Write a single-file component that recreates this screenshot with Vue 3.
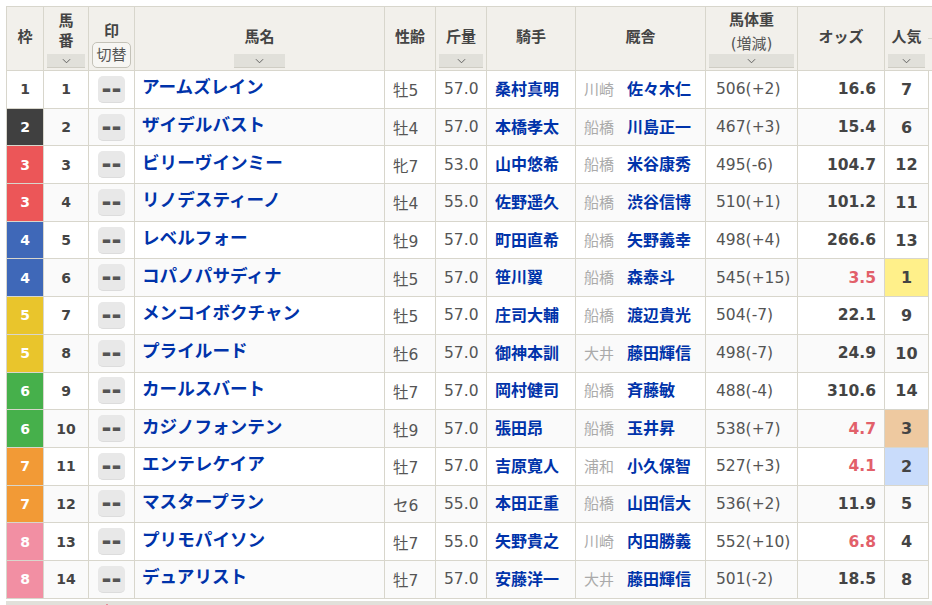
<script setup>
const horses = [
  { waku: 1, no: 1, name: 'アームズレイン', sex: '牡5', kg: '57.0', jockey: '桑村真明', area: '川崎', trainer: '佐々木仁', weight: '506(+2)', odds: '16.6', pop: 7 },
  { waku: 2, no: 2, name: 'ザイデルバスト', sex: '牡4', kg: '57.0', jockey: '本橋孝太', area: '船橋', trainer: '川島正一', weight: '467(+3)', odds: '15.4', pop: 6 },
  { waku: 3, no: 3, name: 'ビリーヴインミー', sex: '牝7', kg: '53.0', jockey: '山中悠希', area: '船橋', trainer: '米谷康秀', weight: '495(-6)', odds: '104.7', pop: 12 },
  { waku: 3, no: 4, name: 'リノデスティーノ', sex: '牡4', kg: '55.0', jockey: '佐野遥久', area: '船橋', trainer: '渋谷信博', weight: '510(+1)', odds: '101.2', pop: 11 },
  { waku: 4, no: 5, name: 'レベルフォー', sex: '牡9', kg: '57.0', jockey: '町田直希', area: '船橋', trainer: '矢野義幸', weight: '498(+4)', odds: '266.6', pop: 13 },
  { waku: 4, no: 6, name: 'コパノパサディナ', sex: '牡5', kg: '57.0', jockey: '笹川翼', area: '船橋', trainer: '森泰斗', weight: '545(+15)', odds: '3.5', pop: 1 },
  { waku: 5, no: 7, name: 'メンコイボクチャン', sex: '牡5', kg: '57.0', jockey: '庄司大輔', area: '船橋', trainer: '渡辺貴光', weight: '504(-7)', odds: '22.1', pop: 9 },
  { waku: 5, no: 8, name: 'プライルード', sex: '牡6', kg: '57.0', jockey: '御神本訓', area: '大井', trainer: '藤田輝信', weight: '498(-7)', odds: '24.9', pop: 10 },
  { waku: 6, no: 9, name: 'カールスバート', sex: '牡7', kg: '57.0', jockey: '岡村健司', area: '船橋', trainer: '斉藤敏', weight: '488(-4)', odds: '310.6', pop: 14 },
  { waku: 6, no: 10, name: 'カジノフォンテン', sex: '牡9', kg: '57.0', jockey: '張田昂', area: '船橋', trainer: '玉井昇', weight: '538(+7)', odds: '4.7', pop: 3 },
  { waku: 7, no: 11, name: 'エンテレケイア', sex: '牡7', kg: '57.0', jockey: '吉原寛人', area: '浦和', trainer: '小久保智', weight: '527(+3)', odds: '4.1', pop: 2 },
  { waku: 7, no: 12, name: 'マスタープラン', sex: 'セ6', kg: '55.0', jockey: '本田正重', area: '船橋', trainer: '山田信大', weight: '536(+2)', odds: '11.9', pop: 5 },
  { waku: 8, no: 13, name: 'プリモパイソン', sex: '牡7', kg: '55.0', jockey: '矢野貴之', area: '川崎', trainer: '内田勝義', weight: '552(+10)', odds: '6.8', pop: 4 },
  { waku: 8, no: 14, name: 'デュアリスト', sex: '牡7', kg: '57.0', jockey: '安藤洋一', area: '大井', trainer: '藤田輝信', weight: '501(-2)', odds: '18.5', pop: 8 }
]
const columns = [37, 45, 46, 250, 51, 51, 89, 130, 92, 87, 44]
</script>

<template>
  <div class="page">
    <table class="race-table">
      <colgroup>
        <col v-for="(w, i) in columns" :key="i" :style="{ width: w + 'px' }" />
      </colgroup>
      <thead>
        <tr>
          <th>枠</th>
          <th class="no-head">
            馬<br />番
            <span class="sort"><svg viewBox="0 0 10 6"><path d="M1 1l4 4 4-4" /></svg></span>
          </th>
          <th class="mark-head">
            印
            <button class="switch">切替</button>
          </th>
          <th>
            馬名
            <span class="sort sort-name"><svg viewBox="0 0 10 6"><path d="M1 1l4 4 4-4" /></svg></span>
          </th>
          <th>性齢</th>
          <th>
            斤量
            <span class="sort"><svg viewBox="0 0 10 6"><path d="M1 1l4 4 4-4" /></svg></span>
          </th>
          <th>騎手</th>
          <th>厩舎</th>
          <th class="weight-head">
            馬体重<br /><span class="sub">(増減)</span>
            <span class="sort"><svg viewBox="0 0 10 6"><path d="M1 1l4 4 4-4" /></svg></span>
          </th>
          <th>オッズ</th>
          <th>
            人気
            <span class="sort"><svg viewBox="0 0 10 6"><path d="M1 1l4 4 4-4" /></svg></span>
          </th>
        </tr>
      </thead>
      <tbody>
        <tr v-for="h in horses" :key="h.no">
          <td class="waku" :class="'waku-' + h.waku">{{ h.waku }}</td>
          <td class="num">{{ h.no }}</td>
          <td class="mark"><span class="mark-btn">--</span></td>
          <td class="name">{{ h.name }}</td>
          <td class="plain">{{ h.sex }}</td>
          <td class="plain">{{ h.kg }}</td>
          <td class="jockey">{{ h.jockey }}</td>
          <td class="stable"><span class="area">{{ h.area }}</span><span class="trainer">{{ h.trainer }}</span></td>
          <td class="plain weight">{{ h.weight }}</td>
          <td class="odds" :class="{ low: parseFloat(h.odds) < 10 }">{{ h.odds }}</td>
          <td class="pop" :class="h.pop <= 3 ? 'pop-' + h.pop : ''">{{ h.pop }}</td>
        </tr>
      </tbody>
    </table>
    <div class="side-strip"></div>
    <div class="next-bar"><span class="next-mark"></span></div>
  </div>
</template>

<style>
html, body {
  margin: 0;
  background: #fff;
  overflow: hidden;
}
</style>

<style scoped>
.page {
  position: relative;
  width: 932px;
  height: 605px;
  padding-top: 6px;
  box-sizing: border-box;
  overflow: hidden;
  font-family: "DejaVu Sans", "Noto Sans CJK JP", sans-serif;
  color: #444;
}

.race-table {
  margin-left: 6px;
  width: 922px;
  table-layout: fixed;
  border-collapse: collapse;
  font-size: 15px;
}

th, td {
  border: 1px solid #d8d6cc;
  padding: 0;
  text-align: center;
}

thead tr {
  height: 64px;
}

th {
  position: relative;
  padding-bottom: 4px;
  background: #f2f0eb;
  font-size: 15px;
  font-weight: 700;
  line-height: 24px;
  color: #444;
}

.no-head {
  padding-bottom: 16px;
  line-height: 20px;
}

.weight-head {
  padding-bottom: 14px;
}

.sub {
  font-weight: 400;
  font-size: 15px;
  color: #555;
}

.sort {
  position: absolute;
  left: 3px;
  right: 3px;
  bottom: 2px;
  height: 13px;
  background: #e1e0da;
  border-bottom: 1px solid #cfcdc4;
  display: flex;
  align-items: center;
  justify-content: center;
}

.sort-name {
  left: 99px;
  right: 99px;
}

.sort svg {
  width: 9px;
  height: 6px;
  fill: none;
  stroke: #555;
  stroke-width: 1;
}

.mark-head {
  vertical-align: bottom;
  padding-bottom: 2px;
  line-height: 21px;
}

.switch {
  display: block;
  box-sizing: border-box;
  width: 39px;
  height: 26px;
  margin: 0 auto;
  padding: 0;
  border: 1px solid #c4c2b8;
  border-radius: 5px;
  background: #f7f6f3;
  font-family: inherit;
  font-size: 15px;
  line-height: 22px;
  color: #555;
}

tbody tr {
  height: 37.7px;
}

tbody tr:nth-child(even) td {
  background: #fafafa;
}

.waku, .num {
  font-size: 14px;
  font-weight: 700;
}

tbody tr td.waku-1 { background: #fff; color: #444; }
tbody tr td.waku-2 { background: #404040; color: #fff; }
tbody tr td.waku-3 { background: #ec5658; color: #fff; }
tbody tr td.waku-4 { background: #3f68b8; color: #fff; }
tbody tr td.waku-5 { background: #e9c52c; color: #fff; }
tbody tr td.waku-6 { background: #46b04b; color: #fff; }
tbody tr td.waku-7 { background: #f29a36; color: #fff; }
tbody tr td.waku-8 { background: #f28fa3; color: #fff; }

.mark-btn {
  display: inline-block;
  width: 27px;
  height: 27px;
  border-radius: 5px;
  background: #e8e8e8;
  border-bottom: 1px solid #dcdcdc;
  box-sizing: border-box;
  font-size: 24px;
  font-weight: 700;
  line-height: 26px;
  vertical-align: middle;
  color: #555;
}

.name {
  padding-left: 7px;
  padding-bottom: 7px;
  text-align: left;
  font-size: 17.6px;
  font-weight: 700;
  color: #0033aa;
  white-space: nowrap;
}

.plain {
  padding-left: 8px;
  text-align: left;
  font-size: 15.5px;
  color: #555;
  white-space: nowrap;
}

.weight {
  padding-left: 10px;
}

.jockey {
  padding-left: 8px;
  padding-bottom: 3px;
  text-align: left;
  font-size: 16px;
  font-weight: 700;
  color: #0033aa;
  white-space: nowrap;
}

.stable {
  padding-left: 8px;
  padding-bottom: 3px;
  text-align: left;
  white-space: nowrap;
}

.area {
  display: inline-block;
  width: 43px;
  font-size: 15px;
  color: #aaa;
}

.trainer {
  font-size: 16px;
  font-weight: 700;
  color: #0033aa;
}

.odds {
  padding-right: 8px;
  text-align: right;
  font-size: 15.5px;
  font-weight: 700;
  color: #444;
}

.odds.low {
  color: #e2606a;
}

.pop {
  font-size: 16px;
  font-weight: 700;
}

tbody tr td.pop-1 { background: #fff08a; }
tbody tr td.pop-2 { background: #c9dcfb; }
tbody tr td.pop-3 { background: #eec9a0; }

/* edge of the next table, cut off by the window */
.side-strip {
  position: absolute;
  left: 928px;
  top: 6px;
  box-sizing: border-box;
  width: 4px;
  height: 65px;
  background: linear-gradient(#d8d6cc, #d8d6cc) 0 31px / 100% 1px no-repeat #f2f0eb;
  border-top: 1px solid #d8d6cc;
  border-bottom: 1px solid #d8d6cc;
}

.next-bar {
  position: relative;
  margin: 2px 0 0 6px;
  width: 926px;
  height: 10px;
  background: #e1e0da;
}

.next-mark {
  position: absolute;
  left: 98px;
  top: 3px;
  width: 0;
  height: 0;
  border-left: 3px solid transparent;
  border-right: 3px solid transparent;
  border-bottom: 3px solid #e0405a;
}
</style>
